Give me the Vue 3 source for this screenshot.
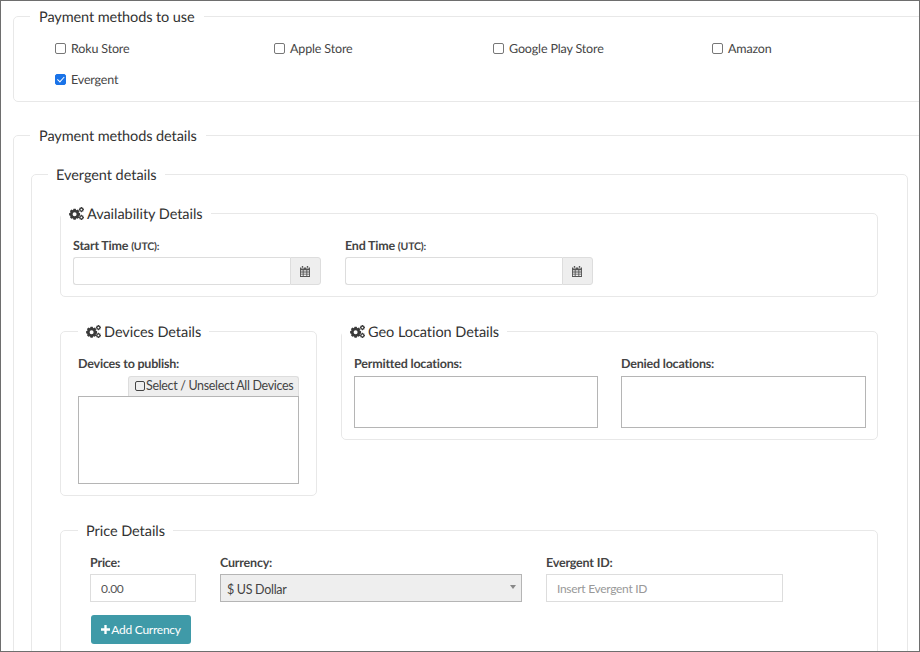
<template>
  <div class="page">
    <fieldset class="box outer">
      <legend>Payment methods to use</legend>
      <div class="methods">
        <label v-for="m in methods" :key="m.name" class="method">
          <input type="checkbox" :checked="m.checked" />
          <span>{{ m.name }}</span>
        </label>
      </div>
    </fieldset>

    <fieldset class="box outer details">
      <legend>Payment methods details</legend>

      <fieldset class="box evergent">
        <legend>Evergent details</legend>
        <div class="evergent-body">

          <fieldset class="box section availability">
            <legend class="with-icon">
              <svg class="cogs" viewBox="0 0 15 13"><path :d="cogsPath" /></svg>
              <span>Availability Details</span>
            </legend>
            <div class="times">
              <div v-for="t in times" :key="t">
                <label class="field-label">{{ t }} <small>(UTC):</small></label>
                <div class="input-group">
                  <input type="text" />
                  <span class="addon">
                    <svg class="calendar" viewBox="0 0 11 12">
                      <path d="M2 0h1.5v2H2zM7.5 0H9v2H7.5z" />
                      <path fill-rule="evenodd" d="M0 1.5h1.3v1.2h2.9V1.5h2.6v1.2h2.9V1.5H11V12H0zM1 4.6v1.5h2V4.6zm3 0v1.5h3V4.6zm4 0v1.5h2V4.6zM1 7v1.5h2V7zm3 0v1.5h3V7zm4 0v1.5h2V7zM1 9.4v1.5h2V9.4zm3 0v1.5h3V9.4zm4 0v1.5h2V9.4z" />
                    </svg>
                  </span>
                </div>
              </div>
            </div>
          </fieldset>

          <div class="two-cols">
            <fieldset class="box section devices">
              <legend class="with-icon">
                <svg class="cogs" viewBox="0 0 15 13"><path :d="cogsPath" /></svg>
                <span>Devices Details</span>
              </legend>
              <label class="field-label">Devices to publish:</label>
              <div class="select-all">
                <button type="button"><span class="tick"></span>Select / Unselect All Devices</button>
              </div>
              <div class="list devices-list"></div>
            </fieldset>

            <fieldset class="box section geo">
              <legend class="with-icon">
                <svg class="cogs" viewBox="0 0 15 13"><path :d="cogsPath" /></svg>
                <span>Geo Location Details</span>
              </legend>
              <div class="locations">
                <div v-for="l in locations" :key="l">
                  <label class="field-label">{{ l }}</label>
                  <div class="list location-list"></div>
                </div>
              </div>
            </fieldset>
          </div>

          <fieldset class="box section price">
            <legend>Price Details</legend>
            <div class="price-row">
              <div class="price-col">
                <label class="field-label">Price:</label>
                <input class="text-input" type="text" value="0.00" />
              </div>
              <div class="currency-col">
                <label class="field-label">Currency:</label>
                <div class="select-wrap">
                  <select>
                    <option>$ US Dollar</option>
                  </select>
                </div>
              </div>
              <div class="id-col">
                <label class="field-label">Evergent ID:</label>
                <input class="text-input" type="text" placeholder="Insert Evergent ID" />
              </div>
            </div>
            <button type="button" class="add-btn">
              <svg class="plus" viewBox="0 0 10 10"><path d="M3.7 0h2.6v3.7H10v2.6H6.3V10H3.7V6.3H0V3.7h3.7z" /></svg>
              Add Currency
            </button>
          </fieldset>

        </div>
      </fieldset>
    </fieldset>
  </div>
</template>

<script setup>
const methods = [
  { name: 'Roku Store', checked: false },
  { name: 'Apple Store', checked: false },
  { name: 'Google Play Store', checked: false },
  { name: 'Amazon', checked: false },
  { name: 'Evergent', checked: true }
]
const times = ['Start Time', 'End Time']
const locations = ['Permitted locations:', 'Denied locations:']

// builds one toothed wheel with a round hole, as svg path data
function gear(cx, cy, outer, inner, hole, teeth) {
  const step = (Math.PI * 2) / teeth
  let d = ''
  for (let i = 0; i < teeth; i++) {
    const a = i * step
    const pts = [
      [inner, a - step * 0.5],
      [outer, a - step * 0.24],
      [outer, a + step * 0.24],
      [inner, a + step * 0.5]
    ]
    for (const [r, t] of pts) {
      const x = (cx + r * Math.cos(t)).toFixed(2)
      const y = (cy + r * Math.sin(t)).toFixed(2)
      d += (d === '' ? 'M' : 'L') + x + ' ' + y
    }
  }
  d += 'Z'
  d += `M${cx - hole} ${cy}a${hole} ${hole} 0 1 0 ${hole * 2} 0a${hole} ${hole} 0 1 0 ${-hole * 2} 0Z`
  return d
}

const cogsPath = [
  gear(5.6, 7.2, 5.6, 4.4, 2, 8),
  gear(12.4, 2.6, 2.6, 1.9, 0.9, 8),
  gear(12.4, 10.4, 2.6, 1.9, 0.9, 8)
].join('')
</script>

<style>
html, body {
  margin: 0;
  background: #fff;
}
</style>

<style scoped>
.page {
  box-sizing: border-box;
  width: 920px;
  height: 652px;
  overflow: hidden;
  border: 1px solid #6e6e6e;
  padding: 5px 0 0 12px;
  font-family: Lato, "Liberation Sans", sans-serif;
  text-rendering: geometricPrecision;
  color: #333;
  background: #fff;
}

.box {
  min-width: 0;
  margin: 0;
  border: 1px solid #e8e8e8;
  border-radius: 5px;
  padding: 0 16px;
}

legend {
  padding: 0 8px;
  height: 20px;
  line-height: 23px;
  font-size: 14.5px;
  letter-spacing: -0.05px;
  color: #333;
  white-space: nowrap;
}

.with-icon {
  display: flex;
  align-items: center;
  gap: 3px;
}

.with-icon span {
  margin-top: 2px;
}

.outer {
  width: 928px;
  box-sizing: border-box;
  margin-bottom: 23px;
}

.outer > legend {
  padding: 0 9px;
  letter-spacing: -0.1px;
}

.methods {
  display: grid;
  grid-template-columns: repeat(4, 219px);
  padding: 7px 0 6px 25px;
}

.method {
  display: flex;
  align-items: center;
  height: 31px;
  font-size: 12.5px;
  letter-spacing: -0.15px;
  color: #444;
}

.method input {
  position: relative;
  flex: none;
  box-sizing: border-box;
  width: 11px;
  height: 11px;
  margin: 0 5px 0 0;
  border: 1px solid #777;
  border-radius: 2px;
  background: #fff;
  appearance: none;
}

.method input:checked {
  border-color: #1a73e8;
  background: #1a73e8;
}

.method input:checked::after {
  content: "";
  position: absolute;
  left: 2.6px;
  top: 0.2px;
  width: 2.6px;
  height: 5.6px;
  border: solid #fff;
  border-width: 0 1.6px 1.6px 0;
  transform: rotate(42deg);
}

.details {
  padding: 0 32px 0 17px;
}

.details > legend {
  margin-left: -1px;
}

.evergent {
  margin-top: 19px;
}

.evergent-body {
  padding: 19px 13px 0 12px;
}

.section {
  margin-bottom: 24px;
}

.availability {
  padding: 13px 11px 11px 12px;
}

.availability legend {
  margin-left: -12px;
}

.field-label {
  display: block;
  height: 18px;
  line-height: 20px;
  font-size: 12.5px;
  font-weight: 700;
  letter-spacing: -0.2px;
  color: #444;
}

.field-label small {
  font-size: 10.5px;
}

.times {
  display: grid;
  grid-template-columns: 248px 248px;
  gap: 24px;
}

.input-group {
  display: flex;
  margin-top: 3px;
  height: 28px;
}

.input-group input {
  flex: 1;
  min-width: 0;
  box-sizing: border-box;
  border: 1px solid #ddd;
  border-right: 0;
  border-radius: 3px 0 0 3px;
  outline: none;
}

.addon {
  display: flex;
  align-items: center;
  justify-content: center;
  width: 31px;
  box-sizing: border-box;
  border: 1px solid #ddd;
  border-radius: 0 3px 3px 0;
  background: #eee;
}

.calendar {
  width: 10px;
  height: 11px;
  margin-right: 1px;
  fill: #555;
}

.cogs {
  width: 15px;
  height: 13px;
  fill: #3a3a3a;
  fill-rule: evenodd;
  flex: none;
}

.two-cols {
  display: grid;
  grid-template-columns: 257px 537px;
  gap: 24px;
  align-items: start;
}

.devices {
  padding: 13px 17px 11px;
}

.select-all {
  display: flex;
  justify-content: flex-end;
  margin-top: 4px;
}

.select-all button {
  display: flex;
  align-items: center;
  gap: 1px;
  box-sizing: border-box;
  height: 20px;
  width: 171px;
  padding: 0 0 2px 6px;
  border: 1px solid #ddd;
  border-bottom: 0;
  border-radius: 3px 3px 0 0;
  background: #eee;
  font: 400 12.5px Lato, "Liberation Sans", sans-serif;
  letter-spacing: -0.33px;
  color: #444;
  white-space: nowrap;
}

.tick {
  display: inline-block;
  flex: none;
  box-sizing: border-box;
  width: 10px;
  height: 10px;
  border: 1px solid #444;
  border-radius: 2px;
}

.list {
  box-sizing: border-box;
  border: 1px solid #b5b5b5;
  background: #fff;
}

.devices-list {
  height: 88px;
}

.location-list {
  height: 52px;
  margin-top: 4px;
}

.geo {
  padding: 13px 11px 11px 12px;
}

.geo legend {
  margin-left: -12px;
}

.locations {
  display: grid;
  grid-template-columns: 244px 245px;
  gap: 23px;
}

.price {
  padding: 13px 17px 20px;
}

.price-row {
  display: flex;
  gap: 24px;
  padding-left: 12px;
}

.price-col {
  width: 106px;
}

.currency-col {
  width: 302px;
}

.id-col {
  width: 237px;
}

.text-input {
  display: block;
  box-sizing: border-box;
  width: 100%;
  height: 28px;
  margin-top: 3px;
  padding: 0 10px;
  border: 1px solid #ddd;
  outline: none;
  font: 400 12px Lato, "Liberation Sans", sans-serif;
  letter-spacing: -0.3px;
  color: #555;
}

.text-input::placeholder {
  color: #999;
  opacity: 1;
}

.select-wrap {
  position: relative;
  margin-top: 3px;
}

.select-wrap select {
  display: block;
  box-sizing: border-box;
  width: 100%;
  height: 28px;
  padding: 2px 6px 0;
  border: 1px solid #b5b5b5;
  border-radius: 0;
  background: #eee;
  appearance: none;
  outline: none;
  font: 400 12.5px Lato, "Liberation Sans", sans-serif;
  letter-spacing: -0.3px;
  color: #444;
}

.select-wrap::after {
  content: "";
  position: absolute;
  top: 11px;
  right: 6px;
  border-left: 3.5px solid transparent;
  border-right: 3.5px solid transparent;
  border-top: 4px solid #888;
}

.add-btn {
  display: flex;
  align-items: center;
  justify-content: center;
  gap: 1px;
  width: 100px;
  height: 29px;
  margin: 13px 0 0 13px;
  padding: 0 0 1px;
  border: 0;
  border-radius: 3px;
  background: #3f9aa8;
  color: #fff;
  font: 400 12px Lato, "Liberation Sans", sans-serif;
  letter-spacing: -0.25px;
}

.plus {
  width: 9px;
  height: 9px;
  fill: #fff;
}
</style>
